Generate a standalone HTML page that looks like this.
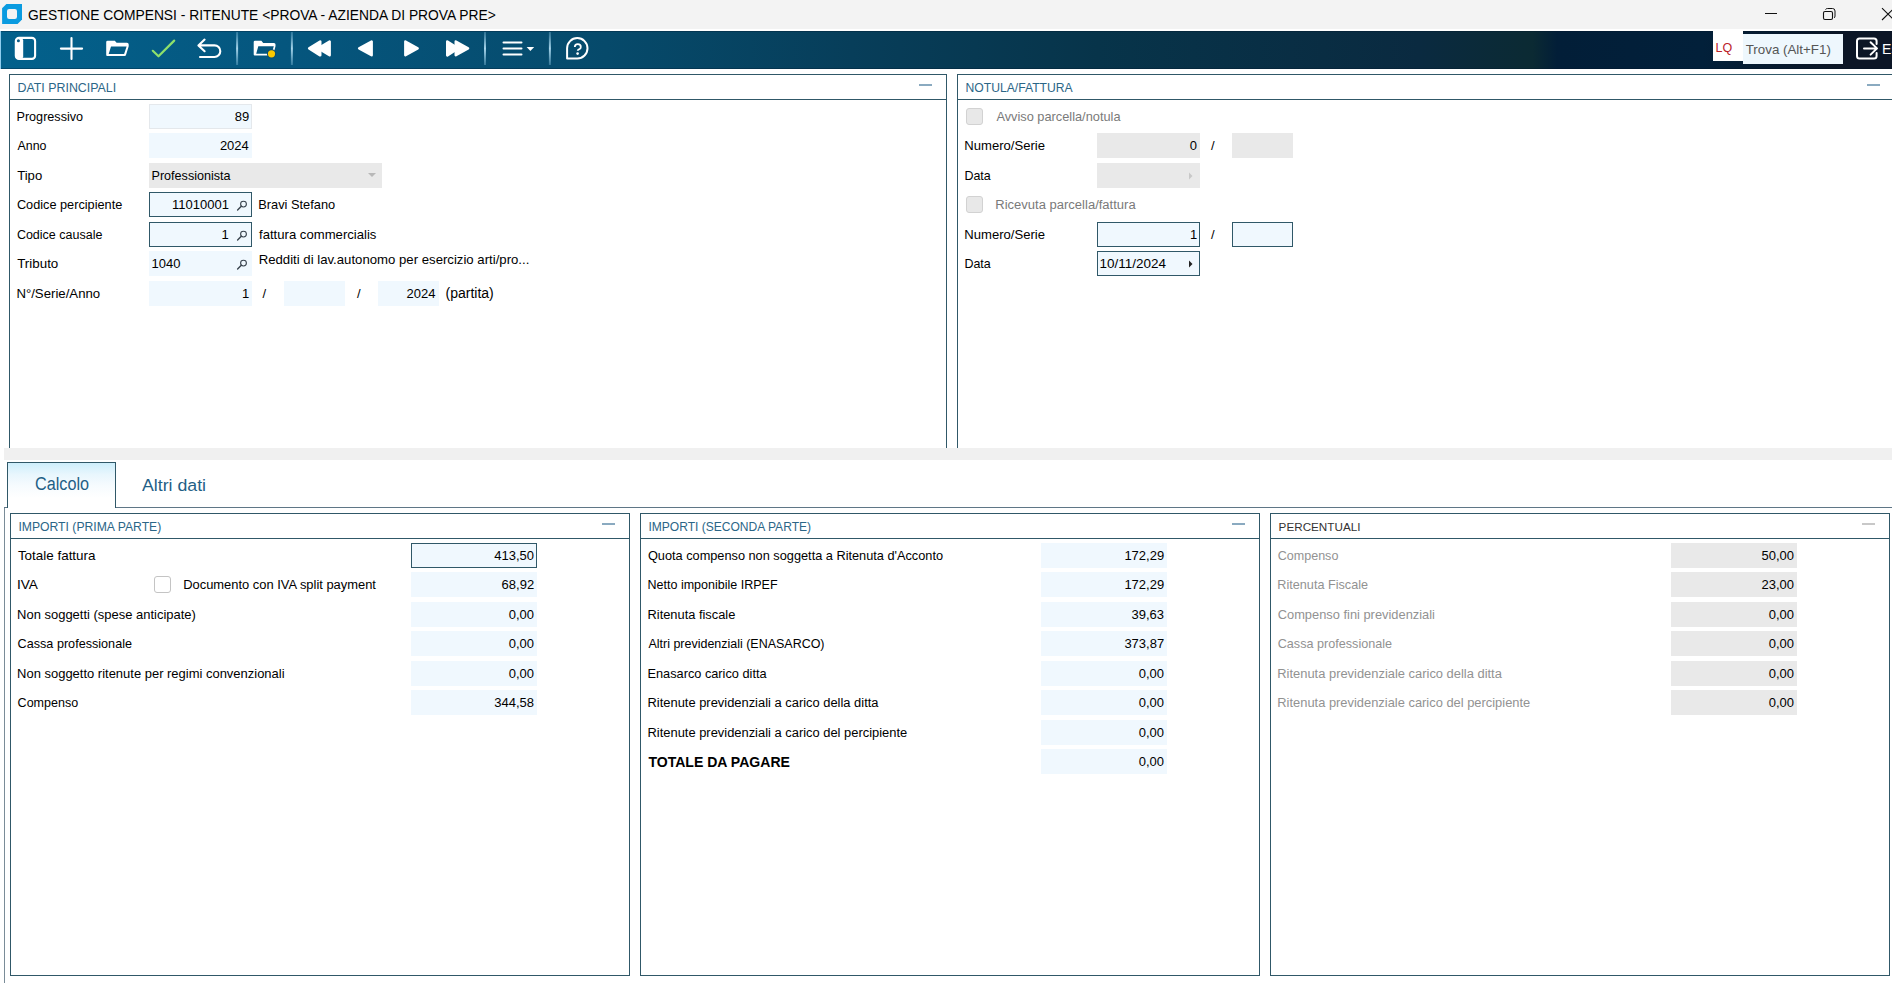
<!DOCTYPE html>
<html><head><meta charset="utf-8"><title>Gestione compensi</title>
<style>
html,body{margin:0;padding:0;}
body{width:1892px;height:983px;overflow:hidden;position:relative;background:#fff;font-family:"Liberation Sans",sans-serif;}
.a{position:absolute;}
.t{position:absolute;line-height:1;white-space:nowrap;}
svg{display:block;}
</style></head><body>
<div class="a" style="left:0px;top:0px;width:1892px;height:29px;background:#f3f3f3;"></div>
<div class="a" style="left:0px;top:29px;width:1892px;height:2px;background:#ffffff;"></div>
<svg class="a" style="left:0;top:0" width="30" height="30" viewBox="0 0 30 30">
<path d="M2.1 8.2 L6.4 4 H22 V19.6 L17.6 24 H2.1 Z" fill="#0a9be0"/>
<rect x="7" y="8.9" width="10" height="10" rx="2.2" fill="#f3f3f3"/></svg>
<div class="t" style="left:27.78px;top:6px;line-height:17px;font-size:15.3px;color:#000;transform:scaleX(0.9032);transform-origin:0 0">GESTIONE COMPENSI - RITENUTE &lt;PROVA - AZIENDA DI PROVA PRE&gt;</div>
<svg class="a" style="left:1750px;top:0" width="142" height="30" viewBox="1750 0 142 30">
<path d="M1765 13.5 H1777" stroke="#111" stroke-width="1" fill="none"/>
<rect x="1823.5" y="11.5" width="9" height="8" rx="1.5" stroke="#111" stroke-width="1.1" fill="none"/>
<path d="M1825.5 9.6 Q1826 8.5 1827.5 8.5 H1832.5 Q1835 8.5 1835 11 V16 Q1835 17.5 1834 18" stroke="#111" stroke-width="1" fill="none"/>
<path d="M1882 8.2 L1894 20 M1882 20 L1894 8.2" stroke="#111" stroke-width="1.1" fill="none"/>
</svg>
<div class="a" style="left:0px;top:31px;width:1px;height:38px;background:#8fcdee;"></div>
<div class="a" style="left:1px;top:31px;width:1891px;height:38px;background:linear-gradient(to right,#03618c 0%,#05567e 15%,#064a6b 32%,#073e5a 45%,#07344a 58%,#0a2a40 75%,#0b2a33 81%,#021e38 82.3%,#02203a 90%,#0c1626 97%,#0c1626 100%);"></div>
<div class="a" style="left:1px;top:31px;width:1891px;height:1px;background:rgba(0,20,40,0.30);"></div>
<div class="a" style="left:1px;top:68px;width:1891px;height:1px;background:rgba(0,20,40,0.30);"></div>
<svg class="a" style="left:0;top:31px" width="620" height="38" viewBox="0 31 620 38">
<defs><linearGradient id="sep" x1="0" y1="0" x2="0" y2="1">
<stop offset="0" stop-color="#8cc6e2" stop-opacity="0.3"/><stop offset="0.5" stop-color="#a6d4ea" stop-opacity="1"/><stop offset="1" stop-color="#8cc6e2" stop-opacity="0.35"/></linearGradient></defs>
<rect x="236.1" y="32" width="2" height="33" fill="url(#sep)"/>
<rect x="290.9" y="32" width="2" height="33" fill="url(#sep)"/>
<rect x="484.0" y="32" width="2" height="33" fill="url(#sep)"/>
<rect x="548.9" y="32" width="2" height="33" fill="url(#sep)"/>
<g fill="none" stroke="#fff" stroke-width="2.1" stroke-linecap="round" stroke-linejoin="round">
<rect x="15.8" y="37.9" width="19.3" height="21" rx="3.2"/>
<path d="M60.9 48.6 H82.1 M71.5 38 V59"/>
<path d="M204.6 39.6 L198.4 45.4 L204.6 51.2 M198.6 45.4 H214.5 A5.8 5.8 0 0 1 214.5 57 H200"/>
<path d="M567.1 58.5 V48.3 A10.2 10.2 0 1 1 577.3 58.5 Z" stroke-width="2"/>
<path d="M574.8 47.1 Q574.8 44.1 577.8 44.1 Q580.8 44.1 580.8 46.9 Q580.8 48.5 579.1 49.3 Q577.7 50 577.7 50.8" stroke-width="1.8" stroke-linecap="butt"/>
<path d="M503.5 42.5 H521.5 M503.5 48.5 H521.5 M503.5 54.4 H521.5" stroke-width="2"/>
</g>
<rect x="15.8" y="38.5" width="7.4" height="20" rx="2" fill="#fff"/>
<circle cx="18.4" cy="40.8" r="1.5" fill="#0a5a84"/>
<path fill="#fff" fill-rule="evenodd" d="M106.2 42.2 Q106.2 40.8 107.6 40.8 H114.8 L116.6 42.7 H127 Q128.7 42.7 128.7 44.4 V46.2 L126 55 Q125.7 56 124.7 56 H107.2 Q106.2 56 106.2 55 Z M111 46.4 H126.6 L124.1 54.1 H108.7 Z"/>
<path d="M152.8 50.8 L158.5 56.3 L174.2 40.6" fill="none" stroke="#8ee06c" stroke-width="2.2" stroke-linecap="round" stroke-linejoin="round"/>
<path fill="#fff" fill-rule="evenodd" d="M253.7 42 Q253.7 40.7 255 40.7 H261.4 L263.2 43 H274 Q275.5 43 275.5 44.5 V46.2 L273 55.6 H254.7 Q253.7 55.6 253.7 54.6 Z M258.3 46.3 H273.8 L271.6 53.8 H256.2 Z"/>
<circle cx="271.5" cy="53.8" r="4.6" fill="#0a4a6e"/>
<circle cx="271.5" cy="53.8" r="3.6" fill="#fbc800"/>
<circle cx="577.6" cy="53.6" r="1.3" fill="#fff"/>
<g fill="#fff" stroke="#fff" stroke-width="2.6" stroke-linejoin="round">
<path d="M309.2 48.4 L320.2 41.5 V55.3 Z"/>
<path d="M318.3 48.4 L329.6 41.6 V55.2 Z"/>
<path d="M359.2 48.4 L371.6 41.6 V55.2 Z"/>
<path d="M405.4 41.6 L417.6 48.4 L405.4 55.2 Z"/>
<path d="M447.3 41.5 L458 48.4 L447.3 55.3 Z"/>
<path d="M455.8 41.6 L468 48.4 L455.8 55.2 Z"/>
</g>
<path d="M526.6 47.1 H534.2 L530.4 50.9 Z" fill="#fff"/>
</svg>
<div class="a" style="left:1713px;top:31px;width:30px;height:30px;background:#ffffff;"></div>
<div class="t" style="left:1715.50px;top:41px;font-size:12.50px;line-height:14px;color:#bb2229;">LQ</div>
<div class="a" style="left:1743px;top:34px;width:100px;height:30px;background:#eef7fd;"></div>
<div class="t" style="left:1745.70px;top:42px;font-size:13.35px;line-height:15px;color:#555;">Trova (Alt+F1)</div>
<svg class="a" style="left:1850px;top:31px" width="42" height="38" viewBox="1850 31 42 38">
<g fill="none" stroke="#fff" stroke-width="2" stroke-linecap="round" stroke-linejoin="round">
<path d="M1876.6 44 V41 Q1876.6 38.4 1874 38.4 H1859.5 Q1857 38.4 1857 41 V56 Q1857 58.6 1859.5 58.6 H1874 Q1876.6 58.6 1876.6 56 V53"/>
<path d="M1864 48.4 H1877 M1870.6 42.2 L1877 48.4 L1870.6 54.6"/>
</g></svg>
<div class="t" style="left:1882.10px;top:41px;font-size:14.00px;line-height:16px;color:#fff;">Es</div>
<div class="a" style="left:9px;top:74px;width:938px;height:1px;background:#305868;"></div>
<div class="a" style="left:9px;top:74px;width:1px;height:374px;background:#305868;"></div>
<div class="a" style="left:946px;top:74px;width:1px;height:374px;background:#305868;"></div>
<div class="a" style="left:9px;top:99px;width:938px;height:1px;background:#305868;"></div>
<div class="t" style="left:17.50px;top:81px;font-size:12.40px;line-height:14px;color:#2b6687;">DATI PRINCIPALI</div>
<div class="a" style="left:919px;top:84px;width:13px;height:2px;background:#8aaac0;"></div>
<div class="a" style="left:957px;top:74px;width:935px;height:1px;background:#305868;"></div>
<div class="a" style="left:957px;top:74px;width:1px;height:374px;background:#305868;"></div>
<div class="a" style="left:957px;top:99px;width:935px;height:1px;background:#305868;"></div>
<div class="t" style="left:965.50px;top:81px;font-size:12.17px;line-height:14px;color:#2b6687;">NOTULA/FATTURA</div>
<div class="a" style="left:1867px;top:84px;width:13px;height:2px;background:#8aaac0;"></div>
<div class="t" style="left:16.50px;top:110px;font-size:12.61px;line-height:14px;color:#000;">Progressivo</div>
<div class="t" style="left:17.50px;top:139px;font-size:12.39px;line-height:14px;color:#000;">Anno</div>
<div class="t" style="left:17.20px;top:168px;font-size:13.11px;line-height:15px;color:#000;">Tipo</div>
<div class="t" style="left:16.90px;top:197px;font-size:12.72px;line-height:15px;color:#000;">Codice percipiente</div>
<div class="t" style="left:16.90px;top:228px;font-size:12.50px;line-height:14px;color:#000;">Codice causale</div>
<div class="t" style="left:17.20px;top:256px;font-size:13.37px;line-height:15px;color:#000;">Tributo</div>
<div class="t" style="left:16.40px;top:286px;font-size:13.21px;line-height:15px;color:#000;">N°/Serie/Anno</div>
<div class="a" style="left:149px;top:104px;width:103px;height:25px;background:#f0f8fe;box-sizing:border-box;border:1px solid #e4e8ec;"></div>
<div class="t" style="left:234.70px;top:109px;font-size:13.00px;line-height:15px;color:#000;">89</div>
<div class="a" style="left:149px;top:133px;width:103px;height:25px;background:#f0f8fe;"></div>
<div class="t" style="left:219.90px;top:138px;font-size:13.00px;line-height:15px;color:#000;">2024</div>
<div class="a" style="left:149px;top:163px;width:233px;height:25px;background:#e9e9e9;"></div>
<div class="t" style="left:151.50px;top:169px;font-size:12.60px;line-height:14px;color:#000;">Professionista</div>
<svg class="a" style="left:366px;top:171px" width="12" height="8"><path d="M2 2 H10 L6 6 Z" fill="#b8b8b8"/></svg>
<div class="a" style="left:149px;top:192px;width:103px;height:25px;background:#f0f8fe;box-sizing:border-box;border:1px solid #305868;"></div>
<div class="t" style="left:172.00px;top:197px;font-size:13.00px;line-height:15px;color:#000;">11010001</div>
<svg class="a" style="left:234px;top:196.5px" width="16" height="16" viewBox="234 196.5 16 16"><circle cx="243.5" cy="203.6" r="2.9" fill="none" stroke="#3a444e" stroke-width="1.1"/><path d="M241.3 205.8 L237.6 209.5" stroke="#3a444e" stroke-width="1.4" stroke-linecap="round"/></svg>
<div class="t" style="left:258.20px;top:197px;font-size:12.83px;line-height:15px;color:#000;">Bravi Stefano</div>
<div class="a" style="left:149px;top:222px;width:103px;height:25px;background:#f0f8fe;box-sizing:border-box;border:1px solid #305868;"></div>
<div class="t" style="left:221.60px;top:227px;font-size:13.00px;line-height:15px;color:#000;">1</div>
<svg class="a" style="left:234px;top:226.5px" width="16" height="16" viewBox="234 226.5 16 16"><circle cx="243.5" cy="233.6" r="2.9" fill="none" stroke="#3a444e" stroke-width="1.1"/><path d="M241.3 235.8 L237.6 239.5" stroke="#3a444e" stroke-width="1.4" stroke-linecap="round"/></svg>
<div class="t" style="left:259.00px;top:227px;font-size:13.13px;line-height:15px;color:#000;">fattura commercialis</div>
<div class="a" style="left:149px;top:251px;width:103px;height:25px;background:#f0f8fe;"></div>
<div class="t" style="left:151.50px;top:256px;font-size:13.00px;line-height:15px;color:#000;">1040</div>
<svg class="a" style="left:234px;top:255.5px" width="16" height="16" viewBox="234 255.5 16 16"><circle cx="243.5" cy="262.6" r="2.9" fill="none" stroke="#3a444e" stroke-width="1.1"/><path d="M241.3 264.8 L237.6 268.5" stroke="#3a444e" stroke-width="1.4" stroke-linecap="round"/></svg>
<div class="t" style="left:258.70px;top:252px;font-size:13.18px;line-height:15px;color:#000;">Redditi di lav.autonomo per esercizio arti/pro...</div>
<div class="a" style="left:149px;top:281px;width:103px;height:25px;background:#f0f8fe;"></div>
<div class="t" style="left:241.90px;top:286px;font-size:13.00px;line-height:15px;color:#000;">1</div>
<div class="t" style="left:262.50px;top:286px;font-size:13.00px;line-height:15px;color:#000;">/</div>
<div class="a" style="left:284px;top:281px;width:61px;height:25px;background:#f0f8fe;"></div>
<div class="t" style="left:357.00px;top:286px;font-size:13.00px;line-height:15px;color:#000;">/</div>
<div class="a" style="left:378px;top:281px;width:61px;height:25px;background:#f0f8fe;"></div>
<div class="t" style="left:406.60px;top:286px;font-size:13.00px;line-height:15px;color:#000;">2024</div>
<div class="t" style="left:445.50px;top:285px;font-size:14.02px;line-height:16px;color:#000;">(partita)</div>
<div class="a" style="left:966px;top:108px;width:17px;height:17px;background:#e8e8e8;box-sizing:border-box;border:1px solid #d2d2d2;border-radius:3px;"></div>
<div class="t" style="left:996.40px;top:109px;font-size:12.79px;line-height:15px;color:#7a7a7a;">Avviso parcella/notula</div>
<div class="t" style="left:964.30px;top:138px;font-size:13.08px;line-height:15px;color:#000;">Numero/Serie</div>
<div class="a" style="left:1097px;top:133px;width:103px;height:25px;background:#e9e9e9;"></div>
<div class="t" style="left:1189.80px;top:138px;font-size:13.00px;line-height:15px;color:#000;">0</div>
<div class="t" style="left:1211.00px;top:138px;font-size:13.00px;line-height:15px;color:#000;">/</div>
<div class="a" style="left:1232px;top:133px;width:61px;height:25px;background:#e9e9e9;"></div>
<div class="t" style="left:964.40px;top:169px;font-size:12.46px;line-height:14px;color:#000;">Data</div>
<div class="a" style="left:1097px;top:163px;width:103px;height:25px;background:#e9e9e9;"></div>
<svg class="a" style="left:1187px;top:171px" width="8" height="10"><path d="M2 1.5 L5.5 5 L2 8.5 Z" fill="#c8c8c8"/></svg>
<div class="a" style="left:966px;top:196px;width:17px;height:17px;background:#e8e8e8;box-sizing:border-box;border:1px solid #d2d2d2;border-radius:3px;"></div>
<div class="t" style="left:995.30px;top:197px;font-size:13.02px;line-height:15px;color:#7a7a7a;">Ricevuta parcella/fattura</div>
<div class="t" style="left:964.30px;top:227px;font-size:13.08px;line-height:15px;color:#000;">Numero/Serie</div>
<div class="a" style="left:1097px;top:222px;width:103px;height:25px;background:#f0f8fe;box-sizing:border-box;border:1px solid #305868;"></div>
<div class="t" style="left:1189.90px;top:227px;font-size:13.00px;line-height:15px;color:#000;">1</div>
<div class="t" style="left:1211.00px;top:227px;font-size:13.00px;line-height:15px;color:#000;">/</div>
<div class="a" style="left:1232px;top:222px;width:61px;height:25px;background:#f0f8fe;box-sizing:border-box;border:1px solid #305868;"></div>
<div class="t" style="left:964.40px;top:257px;font-size:12.46px;line-height:14px;color:#000;">Data</div>
<div class="a" style="left:1097px;top:251px;width:103px;height:25px;background:#f0f8fe;box-sizing:border-box;border:1px solid #305868;"></div>
<div class="t" style="left:1099.50px;top:256px;font-size:13.48px;line-height:15px;color:#000;">10/11/2024</div>
<svg class="a" style="left:1187px;top:259px" width="8" height="10"><path d="M2 1.5 L5.5 5 L2 8.5 Z" fill="#222"/></svg>
<div class="a" style="left:4px;top:448px;width:1888px;height:12px;background:#f0f0f0;"></div>
<div class="a" style="left:115px;top:507px;width:1777px;height:1px;background:#5f7686;"></div>
<div class="a" style="left:4px;top:507px;width:1px;height:476px;background:#7a8c98;"></div>
<div class="a" style="left:4px;top:507px;width:4px;height:1px;background:#5f7686;"></div>
<div class="a" style="left:7px;top:462px;width:109px;height:46px;box-sizing:border-box;border:1px solid #305868;border-bottom:none;background:linear-gradient(to bottom,#cdeefb 0%,#e8f6fd 25%,#f6fbfe 50%,#ffffff 78%)"></div>
<div class="t" style="left:34.57px;top:474px;font-size:17.60px;line-height:20px;color:#1f5f86;transform:scaleX(0.9212);transform-origin:0 0">Calcolo</div>
<div class="t" style="left:142.30px;top:475px;font-size:17.20px;line-height:20px;color:#1f5f86;transform:scaleX(1.0311);transform-origin:0 0">Altri dati</div>
<div class="a" style="left:10px;top:513px;width:620px;height:1px;background:#305868;"></div>
<div class="a" style="left:10px;top:513px;width:1px;height:463px;background:#305868;"></div>
<div class="a" style="left:629px;top:513px;width:1px;height:463px;background:#305868;"></div>
<div class="a" style="left:10px;top:538px;width:620px;height:1px;background:#305868;"></div>
<div class="a" style="left:10px;top:975px;width:620px;height:1px;background:#305868;"></div>
<div class="t" style="left:18.40px;top:520px;font-size:12.19px;line-height:14px;color:#2b6687;">IMPORTI (PRIMA PARTE)</div>
<div class="a" style="left:602px;top:523px;width:13px;height:2px;background:#8aaac0;"></div>
<div class="a" style="left:640px;top:513px;width:620px;height:1px;background:#305868;"></div>
<div class="a" style="left:640px;top:513px;width:1px;height:463px;background:#305868;"></div>
<div class="a" style="left:1259px;top:513px;width:1px;height:463px;background:#305868;"></div>
<div class="a" style="left:640px;top:538px;width:620px;height:1px;background:#305868;"></div>
<div class="a" style="left:640px;top:975px;width:620px;height:1px;background:#305868;"></div>
<div class="t" style="left:648.40px;top:520px;font-size:12.06px;line-height:14px;color:#2b6687;">IMPORTI (SECONDA PARTE)</div>
<div class="a" style="left:1232px;top:523px;width:13px;height:2px;background:#8aaac0;"></div>
<div class="a" style="left:1270px;top:513px;width:620px;height:1px;background:#305868;"></div>
<div class="a" style="left:1270px;top:513px;width:1px;height:463px;background:#305868;"></div>
<div class="a" style="left:1889px;top:513px;width:1px;height:463px;background:#305868;"></div>
<div class="a" style="left:1270px;top:538px;width:620px;height:1px;background:#305868;"></div>
<div class="a" style="left:1270px;top:975px;width:620px;height:1px;background:#305868;"></div>
<div class="t" style="left:1278.60px;top:520px;font-size:11.70px;line-height:13px;color:#333;">PERCENTUALI</div>
<div class="a" style="left:1862px;top:523px;width:13px;height:2px;background:#c8c8c8;"></div>
<div class="t" style="left:17.90px;top:548px;font-size:13.43px;line-height:15px;color:#000;">Totale fattura</div>
<div class="a" style="left:411px;top:543px;width:126px;height:25px;background:#f0f8fe;box-sizing:border-box;border:1px solid #305868;"></div>
<div class="t" style="left:494.30px;top:548px;font-size:13.00px;line-height:15px;color:#000;">413,50</div>
<div class="t" style="left:17.00px;top:577px;font-size:13.63px;line-height:15px;color:#000;">IVA</div>
<div class="a" style="left:411px;top:572px;width:126px;height:25px;background:#f0f8fe;"></div>
<div class="t" style="left:501.60px;top:577px;font-size:13.00px;line-height:15px;color:#000;">68,92</div>
<div class="t" style="left:17.10px;top:607px;font-size:12.97px;line-height:15px;color:#000;">Non soggetti (spese anticipate)</div>
<div class="a" style="left:411px;top:602px;width:126px;height:25px;background:#f0f8fe;"></div>
<div class="t" style="left:508.70px;top:607px;font-size:13.00px;line-height:15px;color:#000;">0,00</div>
<div class="t" style="left:17.60px;top:637px;font-size:12.64px;line-height:14px;color:#000;">Cassa professionale</div>
<div class="a" style="left:411px;top:631px;width:126px;height:25px;background:#f0f8fe;"></div>
<div class="t" style="left:508.70px;top:636px;font-size:13.00px;line-height:15px;color:#000;">0,00</div>
<div class="t" style="left:17.10px;top:666px;font-size:12.98px;line-height:15px;color:#000;">Non soggetto ritenute per regimi convenzionali</div>
<div class="a" style="left:411px;top:661px;width:126px;height:25px;background:#f0f8fe;"></div>
<div class="t" style="left:508.70px;top:666px;font-size:13.00px;line-height:15px;color:#000;">0,00</div>
<div class="t" style="left:17.60px;top:696px;font-size:12.54px;line-height:14px;color:#000;">Compenso</div>
<div class="a" style="left:411px;top:690px;width:126px;height:25px;background:#f0f8fe;"></div>
<div class="t" style="left:494.30px;top:695px;font-size:13.00px;line-height:15px;color:#000;">344,58</div>
<div class="a" style="left:154px;top:576px;width:17px;height:17px;background:#fff;box-sizing:border-box;border:1px solid #c4c4c4;border-radius:3px;"></div>
<div class="t" style="left:183.20px;top:577px;font-size:12.92px;line-height:15px;color:#000;">Documento con IVA split payment</div>
<div class="t" style="left:647.90px;top:548px;font-size:12.76px;line-height:15px;color:#000;">Quota compenso non soggetta a Ritenuta d'Acconto</div>
<div class="a" style="left:1041px;top:543px;width:126px;height:25px;background:#f0f8fe;"></div>
<div class="t" style="left:1124.40px;top:548px;font-size:13.00px;line-height:15px;color:#000;">172,29</div>
<div class="t" style="left:647.50px;top:578px;font-size:12.53px;line-height:14px;color:#000;">Netto imponibile IRPEF</div>
<div class="a" style="left:1041px;top:572px;width:126px;height:25px;background:#f0f8fe;"></div>
<div class="t" style="left:1124.40px;top:577px;font-size:13.00px;line-height:15px;color:#000;">172,29</div>
<div class="t" style="left:647.50px;top:607px;font-size:12.85px;line-height:15px;color:#000;">Ritenuta fiscale</div>
<div class="a" style="left:1041px;top:602px;width:126px;height:25px;background:#f0f8fe;"></div>
<div class="t" style="left:1131.50px;top:607px;font-size:13.00px;line-height:15px;color:#000;">39,63</div>
<div class="t" style="left:648.50px;top:637px;font-size:12.48px;line-height:14px;color:#000;">Altri previdenziali (ENASARCO)</div>
<div class="a" style="left:1041px;top:631px;width:126px;height:25px;background:#f0f8fe;"></div>
<div class="t" style="left:1124.40px;top:636px;font-size:13.00px;line-height:15px;color:#000;">373,87</div>
<div class="t" style="left:647.50px;top:666px;font-size:12.75px;line-height:15px;color:#000;">Enasarco carico ditta</div>
<div class="a" style="left:1041px;top:661px;width:126px;height:25px;background:#f0f8fe;"></div>
<div class="t" style="left:1138.70px;top:666px;font-size:13.00px;line-height:15px;color:#000;">0,00</div>
<div class="t" style="left:647.50px;top:695px;font-size:12.92px;line-height:15px;color:#000;">Ritenute previdenziali a carico della ditta</div>
<div class="a" style="left:1041px;top:690px;width:126px;height:25px;background:#f0f8fe;"></div>
<div class="t" style="left:1138.70px;top:695px;font-size:13.00px;line-height:15px;color:#000;">0,00</div>
<div class="t" style="left:647.50px;top:725px;font-size:12.91px;line-height:15px;color:#000;">Ritenute previdenziali a carico del percipiente</div>
<div class="a" style="left:1041px;top:720px;width:126px;height:25px;background:#f0f8fe;"></div>
<div class="t" style="left:1138.70px;top:725px;font-size:13.00px;line-height:15px;color:#000;">0,00</div>
<div class="t" style="left:648.40px;top:754px;font-size:14.06px;line-height:16px;color:#000;font-weight:bold;">TOTALE DA PAGARE</div>
<div class="a" style="left:1041px;top:749px;width:126px;height:25px;background:#f0f8fe;"></div>
<div class="t" style="left:1138.70px;top:754px;font-size:13.00px;line-height:15px;color:#000;">0,00</div>
<div class="t" style="left:1277.70px;top:549px;font-size:12.56px;line-height:14px;color:#929292;">Compenso</div>
<div class="a" style="left:1671px;top:543px;width:126px;height:25px;background:#e9e9e9;"></div>
<div class="t" style="left:1761.50px;top:548px;font-size:13.00px;line-height:15px;color:#000;">50,00</div>
<div class="t" style="left:1277.30px;top:578px;font-size:12.66px;line-height:14px;color:#929292;">Ritenuta Fiscale</div>
<div class="a" style="left:1671px;top:572px;width:126px;height:25px;background:#e9e9e9;"></div>
<div class="t" style="left:1761.50px;top:577px;font-size:13.00px;line-height:15px;color:#000;">23,00</div>
<div class="t" style="left:1277.70px;top:607px;font-size:12.86px;line-height:15px;color:#929292;">Compenso fini previdenziali</div>
<div class="a" style="left:1671px;top:602px;width:126px;height:25px;background:#e9e9e9;"></div>
<div class="t" style="left:1768.70px;top:607px;font-size:13.00px;line-height:15px;color:#000;">0,00</div>
<div class="t" style="left:1277.70px;top:637px;font-size:12.63px;line-height:14px;color:#929292;">Cassa professionale</div>
<div class="a" style="left:1671px;top:631px;width:126px;height:25px;background:#e9e9e9;"></div>
<div class="t" style="left:1768.70px;top:636px;font-size:13.00px;line-height:15px;color:#000;">0,00</div>
<div class="t" style="left:1277.30px;top:666px;font-size:12.91px;line-height:15px;color:#929292;">Ritenuta previdenziale carico della ditta</div>
<div class="a" style="left:1671px;top:661px;width:126px;height:25px;background:#e9e9e9;"></div>
<div class="t" style="left:1768.70px;top:666px;font-size:13.00px;line-height:15px;color:#000;">0,00</div>
<div class="t" style="left:1277.30px;top:695px;font-size:12.90px;line-height:15px;color:#929292;">Ritenuta previdenziale carico del percipiente</div>
<div class="a" style="left:1671px;top:690px;width:126px;height:25px;background:#e9e9e9;"></div>
<div class="t" style="left:1768.70px;top:695px;font-size:13.00px;line-height:15px;color:#000;">0,00</div>
</body></html>
